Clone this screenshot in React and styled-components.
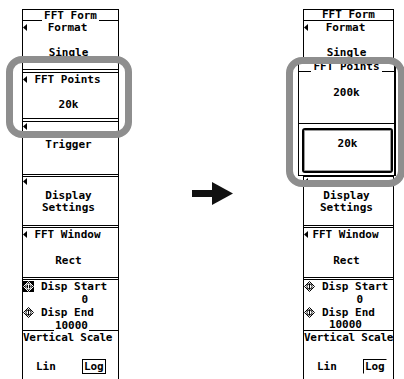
import React from "react";
import styled, { createGlobalStyle } from "styled-components";

const GlobalStyle = createGlobalStyle`
  html, body { margin: 0; padding: 0; background: #fff; }
  body { font-family: "DejaVu Sans Mono", "Liberation Mono", monospace; }
`;

const Page = styled.div`
  width: 404px;
  height: 379px;
  overflow: hidden;
  box-sizing: border-box;
  padding: 9px 0 0 22px;
  display: flex;
  align-items: flex-start;
  background: #fff;
`;

const Panel = styled.div`
  position: relative;
  flex: none;
  width: ${(p) => p.$w}px;
  height: 370px;
  box-sizing: border-box;
  border-left: 1px solid #000;
  border-right: 1px solid #000;
  display: flex;
  flex-direction: column;
  font-family: "DejaVu Sans Mono", "Liberation Mono", monospace;
  font-weight: bold;
  font-size: 11px;
  line-height: 13px;
  color: #000;
  white-space: nowrap;
`;

const Header = styled.div`
  flex: none;
  display: flex;
  height: 12px;
  box-sizing: border-box;
  border-top: ${(p) => (p.$noTop ? "0" : "1px solid #000")};
  ${(p) =>
    p.$boxed &&
    "border-bottom: 1px solid #000; justify-content: center; align-items: center;"}
`;

const Rule = styled.div`
  flex: ${(p) => (p.$w ? `0 0 ${p.$w}px` : "1")};
  border-bottom: 1px solid #000;
`;

const Title = styled.span`
  align-self: ${(p) => (p.$boxed ? "center" : "flex-end")};
  line-height: ${(p) => (p.$boxed ? 10 : 11)}px;
  padding: 0 2px;
  white-space: pre;
`;

const Item = styled.div`
  flex: none;
  height: ${(p) => (p.$h ? `${p.$h}px` : "auto")};
  box-sizing: border-box;
  margin-top: ${(p) => p.$gap || 0}px;
  border-top: ${(p) => (p.$noTop ? "0" : "1px solid #000")};
  border-bottom: ${(p) => (p.$noBottom ? "0" : "1px solid #000")};
  display: flex;
  flex-direction: column;
`;

const LabelRow = styled.div`
  display: flex;
  align-items: center;
  height: ${(p) => p.$h || 13}px;
`;

const Tri = styled.span`
  flex: none;
  width: 4px;
  height: 7px;
  background: #000;
  clip-path: polygon(100% 0, 100% 100%, 0 50%);
`;

const Label = styled.span`
  flex: 1;
  text-align: center;
  padding-right: 10px;
  white-space: pre;
`;

const Value = styled.div`
  margin-top: ${(p) => p.$mt || 0}px;
  line-height: ${(p) => p.$lh || 13}px;
  text-align: center;
  padding-right: 4px;
  white-space: pre;
`;

const ScaleTitle = styled.span`
  letter-spacing: -0.25px;
`;

const JogRow = styled.div`
  display: flex;
  align-items: center;
  height: 13px;
  & > svg {
    flex: none;
    margin-right: 7px;
  }
`;

const JogValue = styled.div`
  height: 13px;
  text-align: right;
  padding-right: 30px;
`;

const JogEnd = styled.div`
  display: flex;
  height: 12px;
  box-sizing: border-box;
  ${(p) => p.$full && "border-bottom: 1px solid #000; justify-content: flex-end; padding-right: 30px;"}
`;

const EndText = styled.span`
  align-self: flex-end;
  line-height: 11px;
  padding: 0 1px;
`;

const ScaleRow = styled.div`
  display: flex;
  align-items: center;
  height: 15px;
  margin-top: 15px;
`;

const Opt = styled.span`
  line-height: 13px;
  margin-left: ${(p) => p.$ml}px;
  padding: 0 1px;
  border-top: ${(p) => (p.$box ? "1px solid #000" : "1px solid transparent")};
  border-left: ${(p) => (p.$box ? "1px solid #000" : "1px solid transparent")};
  border-right: ${(p) => (p.$full ? "1px solid #000" : "1px solid transparent")};
  border-bottom: ${(p) => (p.$full ? "1px solid #000" : "1px solid transparent")};
`;

const ArrowSlot = styled.div`
  flex: none;
  width: 184px;
  box-sizing: border-box;
  padding: 173px 0 0 3px;
  display: flex;
  justify-content: center;
`;

const Highlight = styled.div`
  position: absolute;
  left: ${(p) => p.$x}px;
  top: ${(p) => p.$y}px;
  width: ${(p) => p.$w}px;
  height: ${(p) => p.$h}px;
  box-sizing: border-box;
  border: 7px solid #8e8e8e;
  border-radius: 16px;
  z-index: 2;
  pointer-events: none;
`;

const Popup = styled.div`
  position: absolute;
  left: -6px;
  top: 51px;
  width: 98px;
  height: 116px;
  box-sizing: border-box;
  background: #fff;
  border-left: 1px solid #000;
  border-right: 2px solid #000;
  border-bottom: 1px solid #000;
  display: flex;
  flex-direction: column;
  z-index: 1;
`;

const PopItem = styled.div`
  flex: none;
  height: 52px;
  box-sizing: border-box;
  border-bottom: 1px solid #000;
  padding-top: 14px;
  text-align: center;
`;

const PopSelected = styled.div`
  flex: none;
  height: 45px;
  margin: 4px 1px 0 3px;
  box-sizing: border-box;
  border: 2px solid #000;
  border-radius: 3px;
  box-shadow: inset 0 0 0 1px #9a9a9a;
  padding-top: 7px;
  text-align: center;
`;

const JogIcon = ({ inverted }) => {
  const fg = inverted ? "#fff" : "#000";
  return (
    <svg width="11" height="11" viewBox="0 0 11 11">
      {inverted && <rect width="11" height="11" fill="#000" />}
      <polygon points="5.5,0.5 10.5,5.5 5.5,10.5 0.5,5.5" fill="none" stroke={fg} strokeWidth="1" />
      <circle cx="5.5" cy="5.5" r="2.6" fill="none" stroke={fg} strokeWidth="1" />
      <line x1="5.5" y1="2.5" x2="5.5" y2="8.5" stroke={fg} strokeWidth="1" />
    </svg>
  );
};

const BigArrow = () => (
  <svg width="41" height="23" viewBox="0 0 41 23">
    <rect x="0" y="8" width="21" height="7" fill="#111" />
    <polygon points="20,0 41,11.5 20,23" fill="#111" />
  </svg>
);

function Menu({ w, boxedTitle, activeJog, fullEnd, boxLog, covered, children }) {
  return (
    <Panel $w={w}>
      {boxedTitle ? (
        <Header $boxed>
          <Title $boxed>FFT Form</Title>
        </Header>
      ) : (
        <Header>
          <Rule />
          <Title>FFT Form</Title>
          <Rule />
        </Header>
      )}

      <Item $h={49} $noTop>
        <LabelRow>
          <Tri />
          <Label>Format</Label>
        </LabelRow>
        <Value $mt={12}>Single</Value>
      </Item>

      {/* these two keys sit under the open list on the right-hand screen */}
      <Item $h={47} $gap={2}>
        {!covered && (
          <>
            <LabelRow>
              <Tri />
              <Label>FFT Points</Label>
            </LabelRow>
            <Value $mt={12}>20k</Value>
          </>
        )}
      </Item>

      <Item $h={54} $gap={2}>
        {!covered && (
          <>
            <LabelRow $h={9}>
              <Tri />
            </LabelRow>
            <Value $mt={7}>Trigger</Value>
          </>
        )}
      </Item>

      <Item $h={50} $gap={1}>
        <LabelRow $h={9}>
          <Tri />
        </LabelRow>
        <Value $mt={4} $lh={12}>Display</Value>
        <Value $lh={12}>Settings</Value>
      </Item>

      <Item $h={51} $gap={1}>
        <LabelRow>
          <Tri />
          <Label>FFT Window</Label>
        </LabelRow>
        <Value $mt={13}>Rect</Value>
      </Item>

      <Item $h={52} $gap={1} $noBottom>
        <JogRow>
          <JogIcon inverted={activeJog} />
          <span>Disp Start</span>
        </JogRow>
        <JogValue>0</JogValue>
        <JogRow>
          <JogIcon />
          <span>Disp End</span>
        </JogRow>
        {fullEnd ? (
          <JogEnd $full>
            <EndText>10000</EndText>
          </JogEnd>
        ) : (
          <JogEnd>
            <Rule />
            <EndText>10000</EndText>
            <Rule $w={29} />
          </JogEnd>
        )}
      </Item>

      <Item $noTop $noBottom>
        <LabelRow>
          <ScaleTitle>Vertical Scale</ScaleTitle>
        </LabelRow>
        <ScaleRow>
          <Opt $ml={11}>Lin</Opt>
          <Opt $ml={24} $box $full={boxLog}>
            Log
          </Opt>
        </ScaleRow>
      </Item>

      {children}
    </Panel>
  );
}

export default function App() {
  return (
    <>
      <GlobalStyle />
      <Page>
        <Menu w={97} activeJog boxLog>
          <Highlight $x={-17} $y={47} $w={126} $h={82} />
        </Menu>

        <ArrowSlot>
          <BigArrow />
        </ArrowSlot>

        <Menu w={91} boxedTitle fullEnd covered>
          <Popup>
            <Header $noTop>
              <Rule />
              <Title>FFT Points</Title>
              <Rule />
            </Header>
            <PopItem>200k</PopItem>
            <PopSelected>20k</PopSelected>
          </Popup>
          <Highlight $x={-18} $y={48} $w={119} $h={130} />
        </Menu>
      </Page>
    </>
  );
}
